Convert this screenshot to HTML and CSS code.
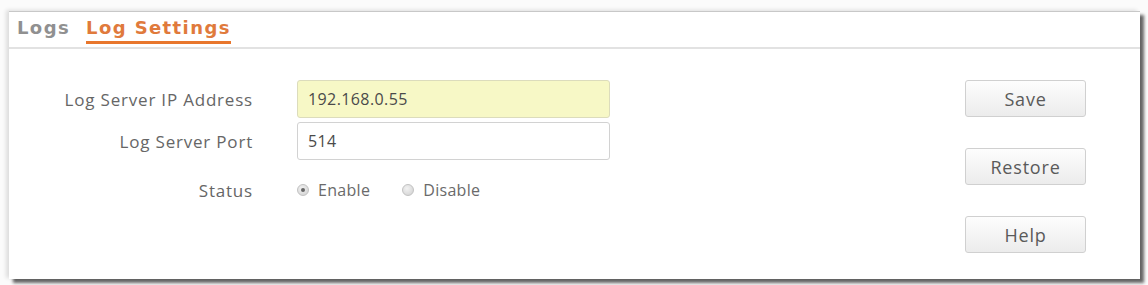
FILE: index.html
```html
<!DOCTYPE html>
<html>
<head>
<meta charset="utf-8">
<link rel="stylesheet" href="styles.css">
</head>
<body>
<div class="frame">
  <div class="panel">
    <div class="tabs">
      <span class="tab">Logs</span>
      <span class="tab active">Log Settings</span>
    </div>
    <div class="content">
      <div class="form">
        <div class="row">
          <label class="label">Log Server IP Address</label>
          <div class="input hl">192.168.0.55</div>
        </div>
        <div class="row">
          <label class="label">Log Server Port</label>
          <div class="input">514</div>
        </div>
        <div class="row status">
          <label class="label">Status</label>
          <div class="radios">
            <span class="radio"><span class="dot on"></span>Enable</span>
            <span class="radio"><span class="dot"></span>Disable</span>
          </div>
        </div>
      </div>
      <div class="buttons">
        <button class="btn">Save</button>
        <button class="btn">Restore</button>
        <button class="btn">Help</button>
      </div>
    </div>
  </div>
</div>
</body>
</html>
```
FILE: styles.css
```css
html, body {
  margin: 0;
  padding: 0;
  background: #fbfbfb;
}
.frame {
  width: 1148px;
  height: 285px;
  padding: 11px 0 0 9px;
  box-sizing: border-box;
}
.panel {
  width: 1131px;
  height: 268px;
  background: #fff;
  border-top: 1px solid #c8c8c8;
  box-sizing: border-box;
  box-shadow: 4px 4px 3px rgba(0,0,0,0.6), -3px -1px 4px rgba(0,0,0,0.12);
  font-family: "Open Sans", "Noto Sans", sans-serif;
}
.tabs {
  height: 35px;
  border-bottom: 2px solid #e2e2e2;
  display: flex;
  align-items: flex-end;
  padding-left: 8px;
  gap: 16px;
  font-family: "DejaVu Sans", sans-serif;
  font-weight: bold;
  font-size: 18px;
  letter-spacing: 1.4px;
}
.tab {
  color: #909090;
  padding-bottom: 2px;
  line-height: 22px;
  border-bottom: 3px solid transparent;
  margin-bottom: 3px;
}
.tab.active {
  color: #e07a3c;
  border-bottom-color: #e8762c;
}
.content {
  display: flex;
  justify-content: space-between;
  padding: 31px 54px 0 0;
}
.form {
  display: flex;
  flex-direction: column;
  gap: 4px;
}
.row {
  display: flex;
  align-items: center;
  gap: 44px;
}
.label {
  width: 244px;
  text-align: right;
  font-size: 17px;
  letter-spacing: 0.8px;
  color: #666;
}
.input {
  width: 313px;
  height: 38px;
  box-sizing: border-box;
  border: 1px solid #d2d2d2;
  border-radius: 3px;
  padding: 0 10px;
  display: flex;
  align-items: center;
  font-size: 16px;
  letter-spacing: 0.4px;
  color: #4a4a4a;
}
.input.hl {
  background: #f7f8c6;
  border-color: #dcdcbc;
}
.row.status {
  margin-top: 8px;
  height: 36px;
}
.radios {
  display: flex;
  gap: 32px;
  font-size: 16px;
  letter-spacing: 0.3px;
  color: #6a6a6a;
}
.radio {
  display: flex;
  align-items: center;
  gap: 9px;
}
.dot {
  width: 10px;
  height: 10px;
  border-radius: 50%;
  border: 1px solid #c2c2c2;
  background: radial-gradient(circle at 40% 35%, #f2f2f2, #cfcfcf);
  display: flex;
  align-items: center;
  justify-content: center;
}
.dot.on::after {
  content: "";
  width: 4px;
  height: 4px;
  border-radius: 50%;
  background: #666;
}
.buttons {
  display: flex;
  flex-direction: column;
  gap: 31px;
}
.btn {
  width: 121px;
  height: 37px;
  border: 1px solid #d0d0d0;
  border-radius: 3px;
  background: linear-gradient(#fdfdfd, #ececec);
  font-family: "Open Sans", "Noto Sans", sans-serif;
  font-size: 18px;
  letter-spacing: 0.8px;
  color: #5a5a5a;
  padding: 0;
}
```
